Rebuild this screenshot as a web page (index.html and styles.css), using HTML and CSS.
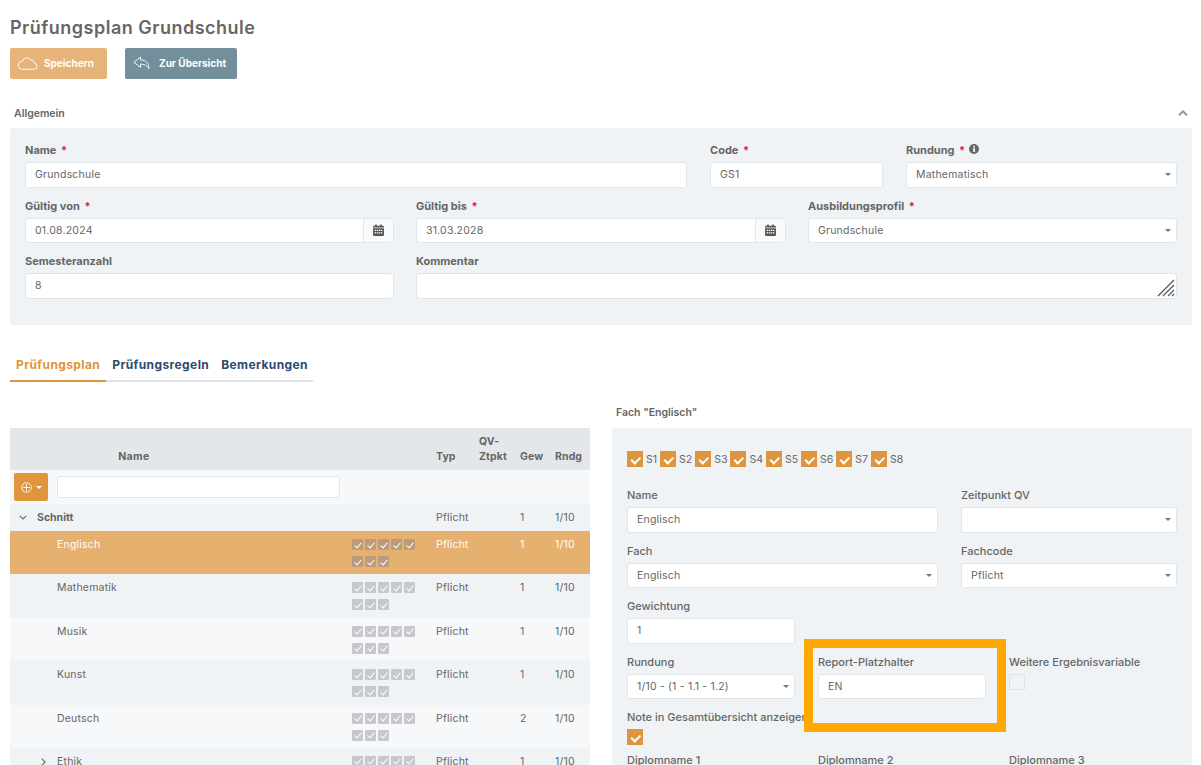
FILE: index.html
```html
<!DOCTYPE html>
<html lang="de">
<head>
    <meta charset="UTF-8">
    <meta name="viewport" content="width=device-width, initial-scale=1.0">
    <title>Prüfungsplan Grundschule</title>
    <link rel="stylesheet" href="styles.css">
</head>
<body>
    <h1 class="page-title">Prüfungsplan Grundschule</h1>

    <div class="toolbar">
        <button class="btn btn-save">
            <svg width="21" height="14" viewBox="0 0 21 14" fill="none" stroke="#fff" stroke-width="0.9"><path d="M4.5 13.3h12.3a3.3 3.3 0 0 0 .6-6.5 3.4 3.4 0 0 0-3.6-3 4.6 4.6 0 0 0-8.3 1.3 1 1 0 0 0-.6 0A4.2 4.2 0 0 0 4.5 13.3z"/></svg>
            Speichern
        </button>
        <button class="btn btn-back">
            <svg width="17" height="14" viewBox="0 0 17 14" fill="none" stroke="#fff" stroke-width="0.9" stroke-linejoin="round"><path d="M7.5 1 .8 6.3l6.7 5V8.2c3.6 0 6.3.8 8.4 4.6.2-5-2.6-8.8-8.4-9z"/></svg>
            Zur Übersicht
        </button>
    </div>

    <div class="section-head">
        <span>Allgemein</span>
        <svg width="10" height="6" viewBox="0 0 10 6" fill="none" stroke="#8a9aa3" stroke-width="2"><path d="M1 5.2 5 1.3l4 3.9"/></svg>
    </div>

    <section class="panel general">
        <div class="form-row row-top">
            <div class="field">
                <label>Name <em>*</em></label>
                <div class="input">Grundschule</div>
            </div>
            <div class="field">
                <label>Code <em>*</em></label>
                <div class="input">GS1</div>
            </div>
            <div class="field">
                <label>Rundung <em>*</em>
                    <svg class="info" width="10" height="10" viewBox="0 0 10 10"><circle cx="5" cy="5" r="5" fill="#666"/><rect x="4.2" y="4.2" width="1.7" height="3.8" fill="#fff"/><rect x="4.2" y="1.9" width="1.7" height="1.5" fill="#fff"/></svg>
                </label>
                <div class="input select">Mathematisch</div>
            </div>
        </div>
        <div class="form-row row-third">
            <div class="field">
                <label>Gültig von <em>*</em></label>
                <div class="input date">
                    <span>01.08.2024</span>
                    <span class="date-addon"><svg width="11" height="12" viewBox="0 0 10 11"><path fill="#555" d="M0 4h10v6a1 1 0 0 1-1 1H1a1 1 0 0 1-1-1zM1 1.500h1V.5h1.500v1h3V.5H8v1h1a1 1 0 0 1 1 1V3.300H0V2.500a1 1 0 0 1 1-1z"/><path fill="#fff" d="M1.500 5.200h1.300v1.200H1.500zM3.400 5.200h1.300v1.200H3.400zM5.300 5.200h1.300v1.200H5.300zM7.200 5.200h1.300v1.200H7.200zM1.500 7.600h1.300v1.200H1.500zM3.400 7.600h1.300v1.200H3.400zM5.300 7.600h1.300v1.200H5.300zM7.200 7.600h1.300v1.200H7.200z"/></svg></span>
                </div>
            </div>
            <div class="field">
                <label>Gültig bis <em>*</em></label>
                <div class="input date">
                    <span>31.03.2028</span>
                    <span class="date-addon"><svg width="11" height="12" viewBox="0 0 10 11"><path fill="#555" d="M0 4h10v6a1 1 0 0 1-1 1H1a1 1 0 0 1-1-1zM1 1.500h1V.5h1.500v1h3V.5H8v1h1a1 1 0 0 1 1 1V3.300H0V2.500a1 1 0 0 1 1-1z"/><path fill="#fff" d="M1.500 5.200h1.300v1.200H1.500zM3.400 5.200h1.300v1.200H3.400zM5.300 5.200h1.300v1.200H5.300zM7.200 5.200h1.300v1.200H7.200zM1.500 7.600h1.300v1.200H1.500zM3.400 7.600h1.300v1.200H3.400zM5.300 7.600h1.300v1.200H5.300zM7.200 7.600h1.300v1.200H7.200z"/></svg></span>
                </div>
            </div>
            <div class="field">
                <label>Ausbildungsprofil <em>*</em></label>
                <div class="input select">Grundschule</div>
            </div>
        </div>
        <div class="form-row row-bottom">
            <div class="field">
                <label>Semesteranzahl</label>
                <div class="input">8</div>
            </div>
            <div class="field">
                <label>Kommentar</label>
                <div class="input textarea">
                    <svg class="resize" width="18" height="18" viewBox="0 0 18 18" stroke="#555" stroke-width="1.200"><path d="M1 17 17 1M6 17 17 6M11 17l6-6M15 17l2-2"/></svg>
                </div>
            </div>
        </div>
    </section>

    <nav class="tabs">
        <a class="tab active">Prüfungsplan</a>
        <a class="tab">Prüfungsregeln</a>
        <a class="tab">Bemerkungen</a>
    </nav>

    <div class="split">
        <div class="tree">
            <div class="tree-row tree-head">
                <div class="col-name">Name</div>
                <div></div>
                <div>Typ</div>
                <div>QV-<br>Ztpkt</div>
                <div>Gew</div>
                <div>Rndg</div>
            </div>
            <div class="tree-filter">
                <button class="add-btn">
                    <svg width="11" height="11" viewBox="0 0 11 11" fill="none" stroke="#fff" stroke-width="0.9"><circle cx="5.500" cy="5.500" r="4.800"/><path d="M5.500 2v7M2 5.500h7"/></svg>
                    <span class="caret"></span>
                </button>
                <div class="input filter-input"></div>
            </div>
            <div class="tree-row group">
                <div class="tree-name">
                    <svg class="arrow" width="8" height="5" viewBox="0 0 8 5" fill="none" stroke="#666" stroke-width="1.100"><path d="M.7.8 4 4 7.300.8"/></svg>
                    <strong>Schnitt</strong>
                </div>
                <div></div>
                <div>Pflicht</div>
                <div></div>
                <div>1</div>
                <div>1/10</div>
            </div>
            <div class="tree-row item selected">
                <div class="item-name">Englisch</div>
                <div class="minis"><i></i><i></i><i></i><i></i><i></i><i></i><i></i><i></i></div>
                <div>Pflicht</div>
                <div></div>
                <div>1</div>
                <div>1/10</div>
            </div>
            <div class="tree-row item">
                <div class="item-name">Mathematik</div>
                <div class="minis"><i></i><i></i><i></i><i></i><i></i><i></i><i></i><i></i></div>
                <div>Pflicht</div>
                <div></div>
                <div>1</div>
                <div>1/10</div>
            </div>
            <div class="tree-row item alt">
                <div class="item-name">Musik</div>
                <div class="minis"><i></i><i></i><i></i><i></i><i></i><i></i><i></i><i></i></div>
                <div>Pflicht</div>
                <div></div>
                <div>1</div>
                <div>1/10</div>
            </div>
            <div class="tree-row item">
                <div class="item-name">Kunst</div>
                <div class="minis"><i></i><i></i><i></i><i></i><i></i><i></i><i></i><i></i></div>
                <div>Pflicht</div>
                <div></div>
                <div>1</div>
                <div>1/10</div>
            </div>
            <div class="tree-row item alt">
                <div class="item-name">Deutsch</div>
                <div class="minis"><i></i><i></i><i></i><i></i><i></i><i></i><i></i><i></i></div>
                <div>Pflicht</div>
                <div></div>
                <div>2</div>
                <div>1/10</div>
            </div>
            <div class="tree-row item">
                <div class="item-name">
                    <svg class="arrow-side" width="5" height="8" viewBox="0 0 5 8" fill="none" stroke="#666" stroke-width="1.100"><path d="M.8.7 4 4 .8 7.300"/></svg>
                    Ethik
                </div>
                <div class="minis"><i></i><i></i><i></i><i></i><i></i><i></i><i></i><i></i></div>
                <div>Pflicht</div>
                <div></div>
                <div>1</div>
                <div>1/10</div>
            </div>
        </div>

        <div class="detail">
            <div class="detail-title">Fach "Englisch"</div>
            <section class="panel subject">
                <div class="semesters">
                    <span class="check on"></span><span>S1</span>
                    <span class="check on"></span><span>S2</span>
                    <span class="check on"></span><span>S3</span>
                    <span class="check on"></span><span>S4</span>
                    <span class="check on"></span><span>S5</span>
                    <span class="check on"></span><span>S6</span>
                    <span class="check on"></span><span>S7</span>
                    <span class="check on"></span><span>S8</span>
                </div>
                <div class="form-row row-two">
                    <div class="field plain">
                        <label>Name</label>
                        <div class="input">Englisch</div>
                    </div>
                    <div class="field plain">
                        <label>Zeitpunkt QV</label>
                        <div class="input select"></div>
                    </div>
                </div>
                <div class="form-row row-two">
                    <div class="field plain">
                        <label>Fach</label>
                        <div class="input select">Englisch</div>
                    </div>
                    <div class="field plain">
                        <label>Fachcode</label>
                        <div class="input select">Pflicht</div>
                    </div>
                </div>
                <div class="form-row row-narrow">
                    <div class="field plain">
                        <label>Gewichtung</label>
                        <div class="input">1</div>
                    </div>
                </div>
                <div class="form-row row-narrow">
                    <div class="field plain">
                        <label>Rundung</label>
                        <div class="input select">1/10 - (1 - 1.1 - 1.2)</div>
                    </div>
                    <div class="field plain">
                        <label>Report-Platzhalter</label>
                        <div class="input">EN</div>
                    </div>
                    <div class="field plain">
                        <label>Weitere Ergebnisvariable</label>
                        <span class="check"></span>
                    </div>
                </div>
                <div class="field plain note-field">
                    <label>Note in Gesamtübersicht anzeigen</label>
                    <span class="check on"></span>
                </div>
                <div class="form-row row-narrow">
                    <div class="field plain"><label>Diplomname 1</label></div>
                    <div class="field plain"><label>Diplomname 2</label></div>
                    <div class="field plain"><label>Diplomname 3</label></div>
                </div>
                <div class="highlight"></div>
            </section>
        </div>
    </div>
</body>
</html>
```

FILE: styles.css
```css
* {
    box-sizing: border-box;
    margin: 0;
    padding: 0;
}

html, body {
    height: 100%;
    overflow: hidden;
}

body {
    font-family: 'Inter', 'Liberation Sans', sans-serif;
    font-size: 11px;
    color: #666;
    background-color: #fff;
    padding: 16px 9px 0 10px;
}

.page-title {
    font-size: 18px;
    line-height: 24px;
    font-weight: 600;
    letter-spacing: 0.5px;
    color: #666;
}

.toolbar {
    display: flex;
    gap: 18px;
    margin-top: 8px;
}

.btn {
    display: flex;
    align-items: center;
    height: 31px;
    padding-bottom: 1px;
    border: none;
    border-radius: 2px;
    color: #fff;
    font-family: inherit;
    font-size: 10px;
    font-weight: 700;
}

.btn-save {
    width: 97px;
    gap: 6px;
    padding-left: 7px;
    background-color: #e6b47a;
}

.btn-back {
    width: 112px;
    gap: 9px;
    padding-left: 8px;
    background-color: #738f9b;
}

.section-head {
    display: flex;
    justify-content: space-between;
    align-items: center;
    height: 16px;
    margin-top: 26px;
    margin-bottom: 7px;
    padding: 0 4px;
    font-size: 10.5px;
    font-weight: 600;
}

.panel {
    background-color: #f0f3f5;
    border-radius: 3px;
}

.general {
    height: 197px;
    padding: 14px 15px 0;
}

.form-row {
    display: grid;
    margin-bottom: 10px;
}

.row-top {
    grid-template-columns: 662px 173px 271px;
    column-gap: 23px;
}

.row-third {
    grid-template-columns: 369px 370px 369px;
    column-gap: 22px;
}

.row-bottom {
    grid-template-columns: 369px 761px;
    column-gap: 22px;
}

.row-two {
    grid-template-columns: 311px 216px;
    column-gap: 23px;
}

.row-narrow {
    grid-template-columns: 168px 168px 168px;
    column-gap: 23px;
}

.field label {
    display: block;
    height: 16px;
    margin-bottom: 4px;
    line-height: 16px;
    font-size: 11px;
    font-weight: 700;
    white-space: nowrap;
}

.field.plain label {
    font-weight: 500;
}

.field em {
    color: #e8112d;
    font-style: normal;
    margin-left: 2px;
}

.info {
    margin-left: 1px;
}

.input {
    position: relative;
    height: 25.500px;
    line-height: 24px;
    padding-left: 9px;
    background-color: #fff;
    border: 1px solid #e3e6e9;
    border-radius: 3px;
    font-size: 10.500px;
    letter-spacing: 0.2px;
    color: #666;
}

.select::after {
    content: "";
    position: absolute;
    right: 5px;
    top: 10px;
    border-left: 3px solid transparent;
    border-right: 3px solid transparent;
    border-top: 3px solid #777;
}

.date {
    display: flex;
    justify-content: space-between;
    padding-right: 0;
}

.date-addon {
    display: flex;
    align-items: center;
    justify-content: center;
    width: 30px;
    background-color: #f8f9fb;
    border-left: 1px solid #e3e6e9;
    border-radius: 0 3px 3px 0;
}

.resize {
    position: absolute;
    right: 1px;
    bottom: 1px;
}

.tabs {
    display: flex;
    width: 303px;
    height: 27px;
    margin-top: 30px;
    border-bottom: 2px solid #dee1e5;
}

.tab {
    height: 27px;
    padding: 2px 6px 0;
    line-height: 16px;
    font-size: 12px;
    font-weight: 700;
    letter-spacing: 0.4px;
    color: #2d4a6d;
}

.tab.active {
    color: #de953c;
    border-bottom: 2px solid #de953c;
}

.split {
    display: grid;
    grid-template-columns: 580px 580px;
    column-gap: 22px;
    height: 361px;
    margin-top: 22px;
    overflow: hidden;
}

.tree {
    margin-top: 24px;
}

.tree-row {
    display: grid;
    grid-template-columns: 336px 90px 43px 41px 35px 35px;
    font-size: 10.500px;
    letter-spacing: 0.2px;
}

.tree-head {
    height: 42px;
    align-items: end;
    padding-bottom: 6px;
    line-height: 15px;
    font-weight: 700;
    letter-spacing: 0.1px;
    background-color: #e3e7ea;
}

.col-name {
    padding-right: 88px;
    text-align: center;
    letter-spacing: 0.4px;
}

.tree-filter {
    display: flex;
    align-items: center;
    gap: 9px;
    height: 34px;
    padding-left: 4px;
    background-color: #f7f8fa;
}

.add-btn {
    display: flex;
    align-items: center;
    justify-content: center;
    gap: 4px;
    width: 34px;
    height: 28px;
    border: none;
    border-radius: 2px;
    background-color: #de953c;
}

.caret {
    border-left: 3px solid transparent;
    border-right: 3px solid transparent;
    border-top: 3px solid #fff;
}

.filter-input {
    width: 283px;
    height: 22px;
}

.group {
    height: 27px;
    align-items: center;
    background-color: #f0f3f5;
}

.tree-name {
    display: flex;
    align-items: center;
    gap: 10px;
    padding-left: 9px;
}

.tree-name strong {
    font-weight: 700;
    letter-spacing: 0;
}

.item {
    height: 43.400px;
    padding-top: 6px;
    line-height: 16px;
    background-color: #f0f3f5;
}

.item.alt {
    background-color: #f7f8fa;
}

.item.selected {
    background-color: #e6b06f;
    color: #fff;
}

.item-name {
    position: relative;
    padding-left: 47px;
}

.arrow-side {
    position: absolute;
    left: 31px;
    top: 4px;
}

.minis {
    display: flex;
    flex-wrap: wrap;
    align-content: flex-start;
    gap: 6px 2px;
    width: 70px;
    padding-top: 2px;
    margin-left: 6px;
}

.minis i {
    position: relative;
    width: 11px;
    height: 11px;
    border-radius: 1px;
    background-color: #c6c8ce;
}

.minis i::after {
    content: "";
    position: absolute;
    left: 3.500px;
    top: 1.500px;
    width: 3px;
    height: 6px;
    border: solid #fff;
    border-width: 0 1px 1px 0;
    transform: rotate(40deg);
}

.selected .minis i {
    background-color: #b89c7b;
}

.detail-title {
    height: 16px;
    margin-top: 1px;
    margin-bottom: 7px;
    padding-left: 4px;
    line-height: 16px;
    font-size: 10.500px;
    font-weight: 600;
}

.subject {
    position: relative;
    height: 337px;
    padding: 23px 15px 0;
}

.semesters {
    display: flex;
    align-items: center;
    height: 16px;
    margin-bottom: 20px;
    font-size: 10.500px;
}

.semesters span:not(.check) {
    margin: 0 3px;
}

.check {
    position: relative;
    display: block;
    flex: none;
    width: 16px;
    height: 16px;
    background-color: #f0f3f5;
    border: 1px solid #e0e3e6;
}

.check.on {
    background-color: #de953c;
    border: none;
}

.check.on::after {
    content: "";
    position: absolute;
    left: 6px;
    top: 4px;
    width: 4px;
    height: 6.500px;
    border: solid #fff;
    border-width: 0 2px 2px 0;
    transform: rotate(45deg);
}

.note-field {
    margin-bottom: 7px;
}

/* Markierung über dem Feld Report-Platzhalter */
.highlight {
    position: absolute;
    left: 192px;
    top: 211px;
    width: 202px;
    height: 93px;
    border: 9px solid #ffa900;
}
```
